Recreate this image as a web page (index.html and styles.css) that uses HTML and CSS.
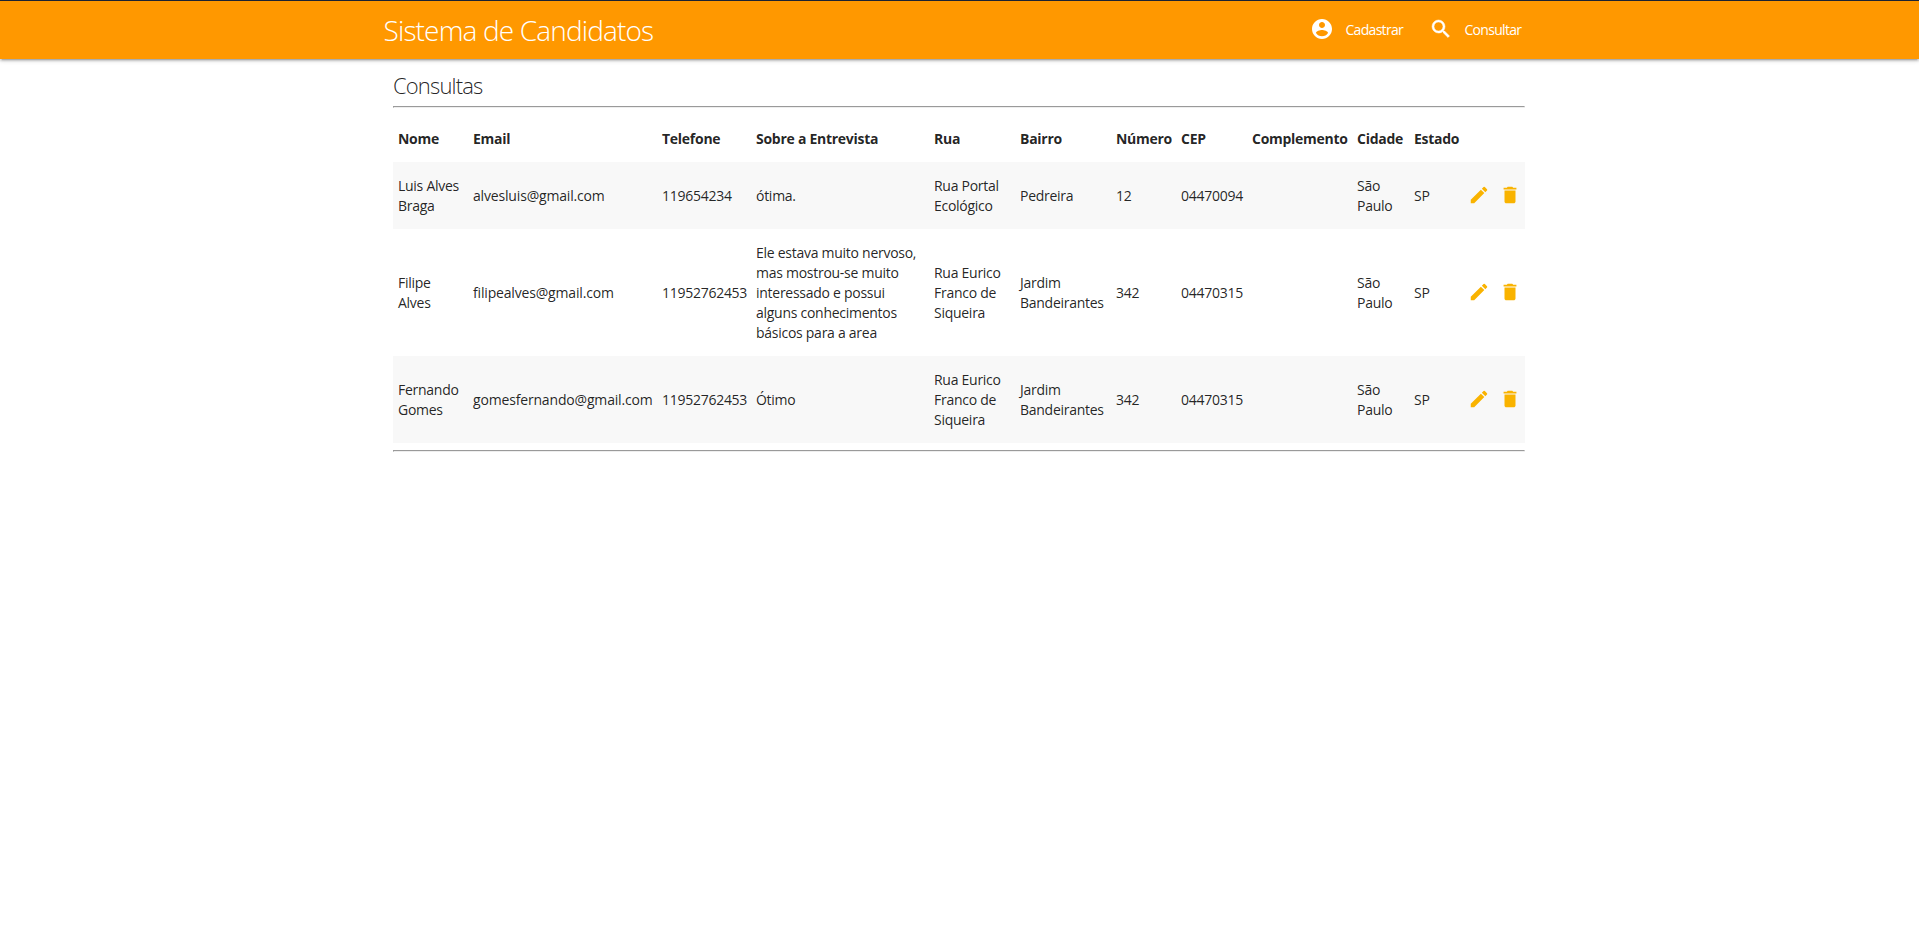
FILE: index.html
```html
<!DOCTYPE html>
<html lang="pt-BR">
<head>
<meta charset="utf-8">
<title>Sistema de Candidatos</title>
<link rel="stylesheet" href="styles.css">
</head>
<body>
<svg class="sprite" width="0" height="0">
  <symbol id="edit" viewBox="0 0 24 24"><path d="M3 17.25V21h3.75L17.81 9.94l-3.75-3.75L3 17.25zM20.71 7.04a1 1 0 0 0 0-1.41l-2.34-2.34a1 1 0 0 0-1.41 0l-1.83 1.83 3.75 3.75 1.83-1.83z"/></symbol>
  <symbol id="delete" viewBox="0 0 24 24"><path d="M6 19c0 1.1.9 2 2 2h8c1.1 0 2-.9 2-2V7H6v12zM19 4h-3.5l-1-1h-5l-1 1H5v2h14V4z"/></symbol>
</svg>
<nav class="navbar">
  <div class="nav-inner">
    <a class="brand">Sistema de Candidatos</a>
    <div class="nav-links">
      <a class="nav-link first"><svg class="nav-icon" viewBox="0 0 24 24"><path d="M12 2C6.48 2 2 6.48 2 12s4.48 10 10 10 10-4.48 10-10S17.52 2 12 2zm0 3c1.66 0 3 1.34 3 3s-1.34 3-3 3-3-1.34-3-3 1.34-3 3-3zm0 14.2a7.2 7.2 0 0 1-6-3.22c.03-1.99 4-3.08 6-3.08 1.99 0 5.97 1.09 6 3.08a7.2 7.2 0 0 1-6 3.22z"/></svg><span>Cadastrar</span></a>
      <a class="nav-link"><svg class="nav-icon search" viewBox="0 0 24 24"><path d="M15.5 14h-.79l-.28-.27A6.471 6.471 0 0 0 16 9.5 6.5 6.5 0 1 0 9.5 16c1.61 0 3.09-.59 4.23-1.57l.27.28v.79l5 4.99L20.49 19l-4.99-5zm-6 0C7.01 14 5 11.99 5 9.5S7.01 5 9.5 5 14 7.01 14 9.5 11.99 14 9.5 14z"/></svg><span>Consultar</span></a>
    </div>
  </div>
</nav>
<main class="content">
  <h1 class="title">Consultas</h1>
  <hr class="rule">
  <table class="table">
    <colgroup><col class="c-nome"><col class="c-email"><col class="c-tel"><col class="c-sobre"><col class="c-rua"><col class="c-bairro"><col class="c-num"><col class="c-cep"><col class="c-comp"><col class="c-cidade"><col class="c-estado"><col class="c-acoes"></colgroup>
    <thead>
      <tr><th>Nome</th><th>Email</th><th>Telefone</th><th>Sobre a Entrevista</th><th>Rua</th><th>Bairro</th><th>Número</th><th>CEP</th><th>Complemento</th><th>Cidade</th><th>Estado</th><th></th></tr>
    </thead>
    <tbody>
      <tr><td>Luis Alves<br>Braga</td><td class="email">alvesluis@gmail.com</td><td>119654234</td><td>ótima.</td><td>Rua Portal<br>Ecológico</td><td>Pedreira</td><td>12</td><td>04470094</td><td></td><td>São<br>Paulo</td><td>SP</td><td><div class="actions"><svg class="icon"><use href="#edit"/></svg><svg class="icon"><use href="#delete"/></svg></div></td></tr>
      <tr><td>Filipe<br>Alves</td><td class="email">filipealves@gmail.com</td><td>11952762453</td><td>Ele estava muito nervoso,<br>mas mostrou-se muito<br>interessado e possui<br>alguns conhecimentos<br>básicos para a area</td><td>Rua Eurico<br>Franco de<br>Siqueira</td><td>Jardim<br>Bandeirantes</td><td>342</td><td>04470315</td><td></td><td>São<br>Paulo</td><td>SP</td><td><div class="actions"><svg class="icon"><use href="#edit"/></svg><svg class="icon"><use href="#delete"/></svg></div></td></tr>
      <tr><td>Fernando<br>Gomes</td><td class="email">gomesfernando@gmail.com</td><td>11952762453</td><td>Ótimo</td><td>Rua Eurico<br>Franco de<br>Siqueira</td><td>Jardim<br>Bandeirantes</td><td>342</td><td>04470315</td><td></td><td>São<br>Paulo</td><td>SP</td><td><div class="actions"><svg class="icon"><use href="#edit"/></svg><svg class="icon"><use href="#delete"/></svg></div></td></tr>
    </tbody>
  </table>
  <hr class="rule">
</main>
</body>
</html>
```
FILE: styles.css
```css
* { box-sizing: border-box; }
body {
  margin: 0;
  background: #fff;
  color: rgba(0, 0, 0, 0.87);
  font-family: "Open Sans", "Noto Sans", sans-serif;
  font-size: 14px;
  line-height: 20px;
}
.sprite { position: absolute; }
.navbar {
  height: 59px;
  background: #ff9800;
  border-top: 1px solid #1c2333;
  box-shadow: 0 2px 2px 0 rgba(0, 0, 0, 0.14), 0 3px 1px -2px rgba(0, 0, 0, 0.12), 0 1px 5px 0 rgba(0, 0, 0, 0.2);
  color: #fff;
}
.nav-inner {
  display: flex;
  justify-content: space-between;
  align-items: center;
  width: 1152px;
  height: 100%;
  margin: 0 auto;
  padding-right: 14px;
}
.brand { font-size: 28px; font-weight: 300; line-height: 40px; letter-spacing: -0.85px; }
.nav-links { display: flex; }
.nav-link { display: flex; align-items: center; gap: 12px; width: 93px; white-space: nowrap; letter-spacing: -0.7px; }
.nav-link.first { width: 119px; }
.nav-icon { width: 24px; height: 24px; fill: #fff; flex: none; margin-top: -2px; }
.nav-icon.search { stroke: #fff; stroke-width: 0.5px; }
.content { width: 1132px; margin: 0 0 0 393px; }
.title { margin: 0; padding-top: 11px; font-size: 22px; font-weight: 300; line-height: 30px; letter-spacing: -0.85px; height: 47px; }
.rule { margin: 0; height: 2px; border: 1px solid; border-color: #9a9a9a #eee #eee #9a9a9a; }
.table { width: 1132px; margin: 7px 0; table-layout: fixed; border-collapse: collapse; white-space: nowrap; }
.table th, .table td { padding: 14px 5px 13px; text-align: left; vertical-align: middle; letter-spacing: -0.27px; }
.table th { font-weight: 700; }
.table .email { letter-spacing: -0.17px; }
.table tbody tr:nth-child(odd) { background: #f8f8f8; }
.c-nome { width: 75px; }
.c-email { width: 189px; }
.c-tel { width: 94px; }
.c-sobre { width: 178px; }
.c-rua { width: 86px; }
.c-bairro { width: 96px; }
.c-num { width: 65px; }
.c-cep { width: 71px; }
.c-comp { width: 105px; }
.c-cidade { width: 57px; }
.c-estado { width: 55px; }
.c-acoes { width: 61px; }
.actions { display: flex; gap: 9px; height: 20px; align-items: center; margin-left: -1px; margin-top: -2px; }
.icon { width: 22px; height: 22px; fill: #f9b300; flex: none; }
```
